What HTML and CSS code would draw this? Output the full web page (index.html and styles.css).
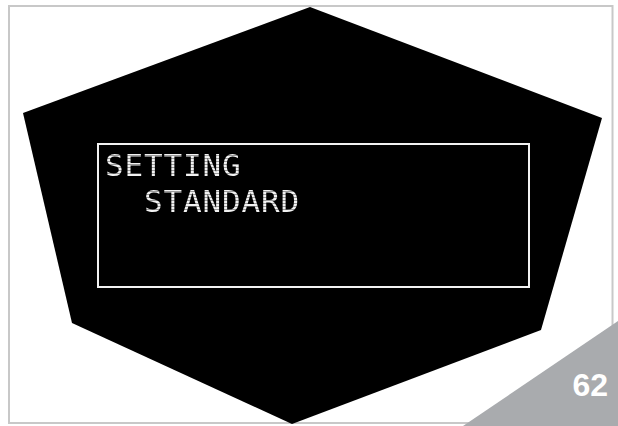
FILE: index.html
```html
<!DOCTYPE html>
<html>
<head>
<meta charset="utf-8">
<link rel="stylesheet" href="styles.css">
</head>
<body>
<div class="page">
  <svg class="art" width="618" height="426" viewBox="0 0 618 426" aria-hidden="true">
    <rect x="9" y="6" width="603.5" height="417" fill="#fff" stroke="#c8c8c8" stroke-width="2"/>
    <polygon points="310,7 602,118 541,330 292,424 72,323 23,113" fill="#000"/>
    <polygon points="463,426 618,321 618,426" fill="#a9abae"/>
  </svg>
  <div class="lcd">
    <div class="line">SETTING</div>
    <div class="line">  STANDARD</div>
  </div>
  <span class="page-num">62</span>
</div>
</body>
</html>
```
FILE: styles.css
```css
html, body {
  margin: 0;
  padding: 0;
  background: #fff;
}
.page {
  position: relative;
  width: 618px;
  height: 426px;
  overflow: hidden;
  padding: 143px 0 0 97px;
  box-sizing: border-box;
}
.art {
  position: absolute;
  left: 0;
  top: 0;
}
.lcd {
  position: relative;
  box-sizing: border-box;
  width: 433px;
  height: 145px;
  border: 2px solid #f2f2f2;
  padding: 2px 0 0 6px;
}
.line {
  font-family: "DejaVu Sans Mono", monospace;
  font-size: 31px;
  line-height: 36px;
  letter-spacing: 0.84px;
  white-space: pre;
  color: transparent;
  background: repeating-linear-gradient(180deg, #f2f2f2 0 2px, #9a9a9a 2px 3px);
  -webkit-background-clip: text;
  background-clip: text;
}
.page-num {
  position: absolute;
  right: 10px;
  bottom: 25px;
  font-family: "Liberation Sans", Arial, sans-serif;
  font-weight: bold;
  font-size: 32px;
  line-height: 1;
  color: #fff;
}
```
